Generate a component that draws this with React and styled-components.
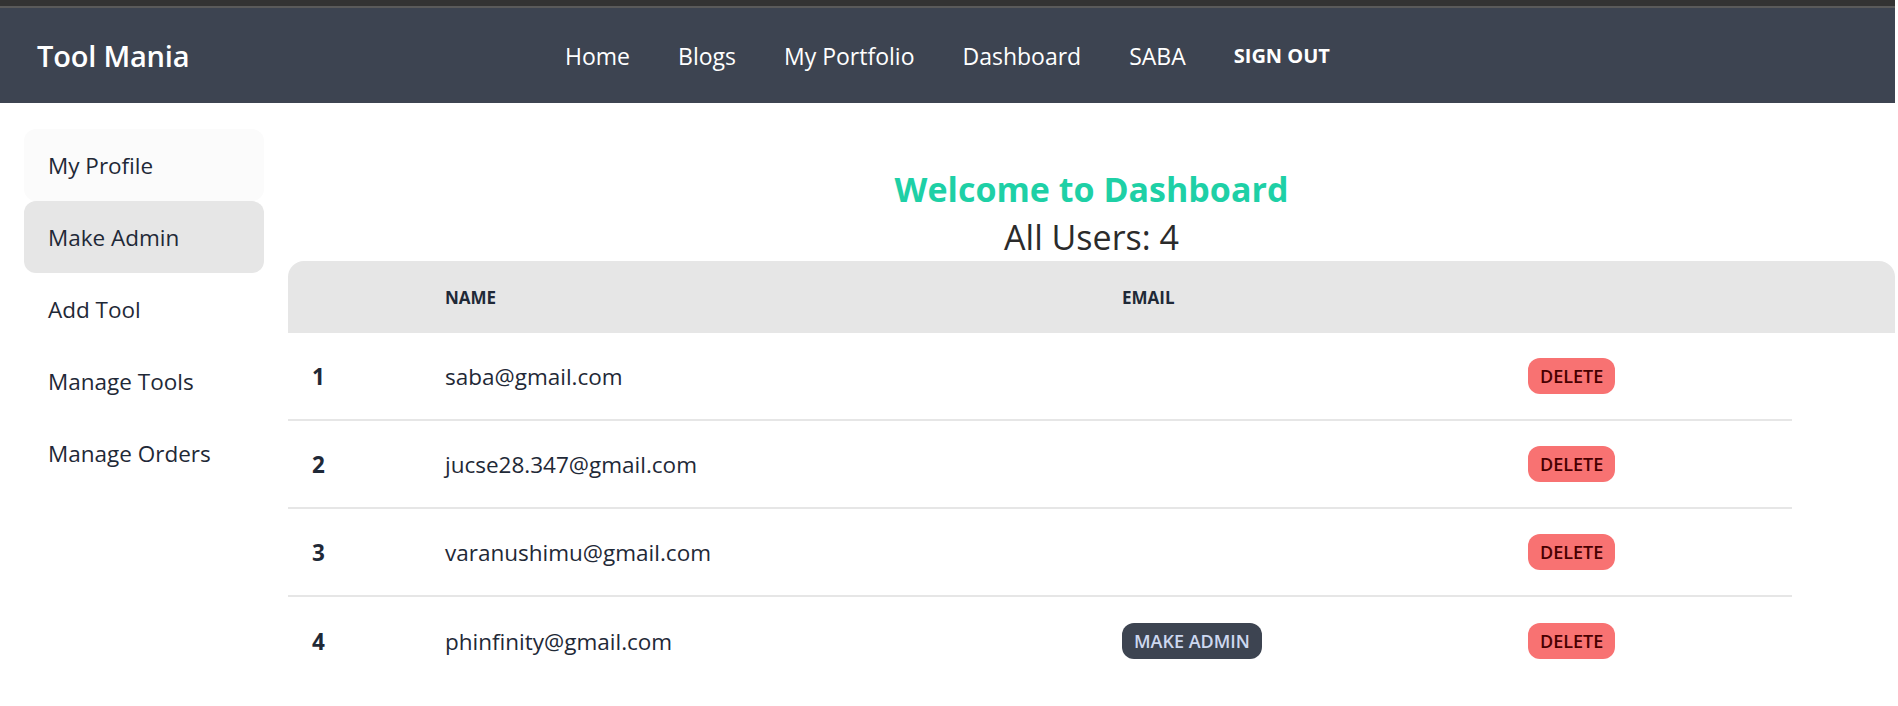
import React from 'react';
import styled, { createGlobalStyle } from 'styled-components';

const GlobalStyle = createGlobalStyle`
  * { box-sizing: border-box; }
  html, body {
    margin: 0;
    padding: 0;
    background: #ffffff;
  }
  body {
    font-family: "Open Sans", "Noto Sans", sans-serif;
    color: #1f2937;
  }
`

const Page = styled.div`
  min-height: 706px;
  margin-right: 3px;
  display: flex;
  flex-direction: column;
`

const TopStrip = styled.div`
  height: 8px;
  background: #333333;
  border-bottom: 2px solid #5a5a5a;
`

const Navbar = styled.nav`
  height: 95px;
  background: #3d4451;
  display: grid;
  grid-template-columns: 1fr auto 1fr;
  align-items: center;
  padding: 0 12px;
  color: #ffffff;
`

const Logo = styled.a`
  justify-self: start;
  padding: 0 25px;
  font-size: 29px;
  font-weight: 600;
  letter-spacing: -0.2px;
`

const NavLinks = styled.ul`
  display: flex;
  align-items: center;
  list-style: none;
  margin: 0;
  padding: 0;
`

const NavItem = styled.li`
  padding: 0 24px;
  font-size: ${props => props.$button ? '20px' : '23px'};
  font-weight: ${props => props.$button ? 700 : 400};
  text-transform: ${props => props.$button ? 'uppercase' : 'none'};
  line-height: 48px;
  white-space: nowrap;
`

const Body = styled.div`
  display: flex;
  flex: 1;
`

const Sidebar = styled.ul`
  width: 288px;
  flex-shrink: 0;
  list-style: none;
  margin: 0;
  padding: 26px 24px;
`

const MenuItem = styled.li`
  height: 72px;
  display: flex;
  align-items: center;
  padding: 0 24px;
  border-radius: 12px;
  font-size: 22.5px;
  color: #1f2937;
  background: ${props => props.$active ? '#e6e6e6' : props.$focus ? '#fbfbfb' : 'transparent'};
`

const Content = styled.main`
  flex: 1;
  min-width: 0;
  padding-top: 62px;
  display: flex;
  flex-direction: column;
`

const Title = styled.h2`
  margin: 0;
  text-align: center;
  font-size: 34px;
  font-weight: 700;
  line-height: 48px;
  color: #1ed0a6;
`

const Subtitle = styled.h3`
  margin: 0;
  text-align: center;
  font-size: 34px;
  font-weight: 400;
  line-height: 48px;
  color: #2b2b2b;
`

const Table = styled.table`
  width: 100%;
  table-layout: fixed;
  border-collapse: separate;
  border-spacing: 0;
`

const Th = styled.th`
  height: 72px;
  padding: 0 24px;
  background: #e6e6e6;
  text-align: left;
  font-size: 17px;
  font-weight: 700;
  text-transform: uppercase;
  color: #1f2937;
  &:first-child { border-top-left-radius: 16px; }
  &:last-child { border-top-right-radius: 16px; }
`

const Row = styled.tr`
  &:not(:last-child) td {
    border-bottom: 2px solid #e6e6e6;
  }
`

const Td = styled.td`
  height: 88px;
  padding: 0 24px;
  font-size: 22.5px;
  font-weight: ${props => props.$bold ? 700 : 400};
  color: #1f2937;
  white-space: nowrap;
`

const Button = styled.button`
  height: 36px;
  padding: 0 12px;
  border: none;
  border-radius: 12px;
  font-family: inherit;
  font-size: 18px;
  font-weight: 600;
  text-transform: uppercase;
  cursor: pointer;
  background: ${props => props.$variant === 'error' ? '#f87272' : '#3d4451'};
  color: ${props => props.$variant === 'error' ? '#470000' : '#cdd8f0'};
`

const users = [
  { email: 'saba@gmail.com', admin: true },
  { email: 'jucse28.347@gmail.com', admin: true },
  { email: 'varanushimu@gmail.com', admin: true },
  { email: 'phinfinity@gmail.com', admin: false },
];

const menu = ['My Profile', 'Make Admin', 'Add Tool', 'Manage Tools', 'Manage Orders'];

const App = () => {
  return (
    <Page>
      <GlobalStyle />
      <TopStrip />
      <Navbar>
        <Logo>Tool Mania</Logo>
        <NavLinks>
          <NavItem>Home</NavItem>
          <NavItem>Blogs</NavItem>
          <NavItem>My Portfolio</NavItem>
          <NavItem>Dashboard</NavItem>
          <NavItem>SABA</NavItem>
          <NavItem $button>Sign out</NavItem>
        </NavLinks>
        <div />
      </Navbar>
      <Body>
        <Sidebar>
          {menu.map((item, index) => (
            <MenuItem key={item} $focus={index === 0} $active={index === 1}>{item}</MenuItem>
          ))}
        </Sidebar>
        <Content>
          <Title>Welcome to Dashboard</Title>
          <Subtitle>All Users: {users.length}</Subtitle>
          <Table>
            <colgroup>
              <col style={{ width: '133px' }} />
              <col style={{ width: '677px' }} />
              <col style={{ width: '406px' }} />
              <col style={{ width: '288px' }} />
              <col />
            </colgroup>
            <thead>
              <tr>
                <Th></Th>
                <Th>Name</Th>
                <Th>Email</Th>
                <Th></Th>
                <Th></Th>
              </tr>
            </thead>
            <tbody>
              {users.map((user, index) => (
                <Row key={user.email}>
                  <Td $bold>{index + 1}</Td>
                  <Td>{user.email}</Td>
                  <Td>{!user.admin && <Button>Make Admin</Button>}</Td>
                  <Td><Button $variant="error">Delete</Button></Td>
                </Row>
              ))}
            </tbody>
          </Table>
        </Content>
      </Body>
    </Page>
  );
}

export default App;
